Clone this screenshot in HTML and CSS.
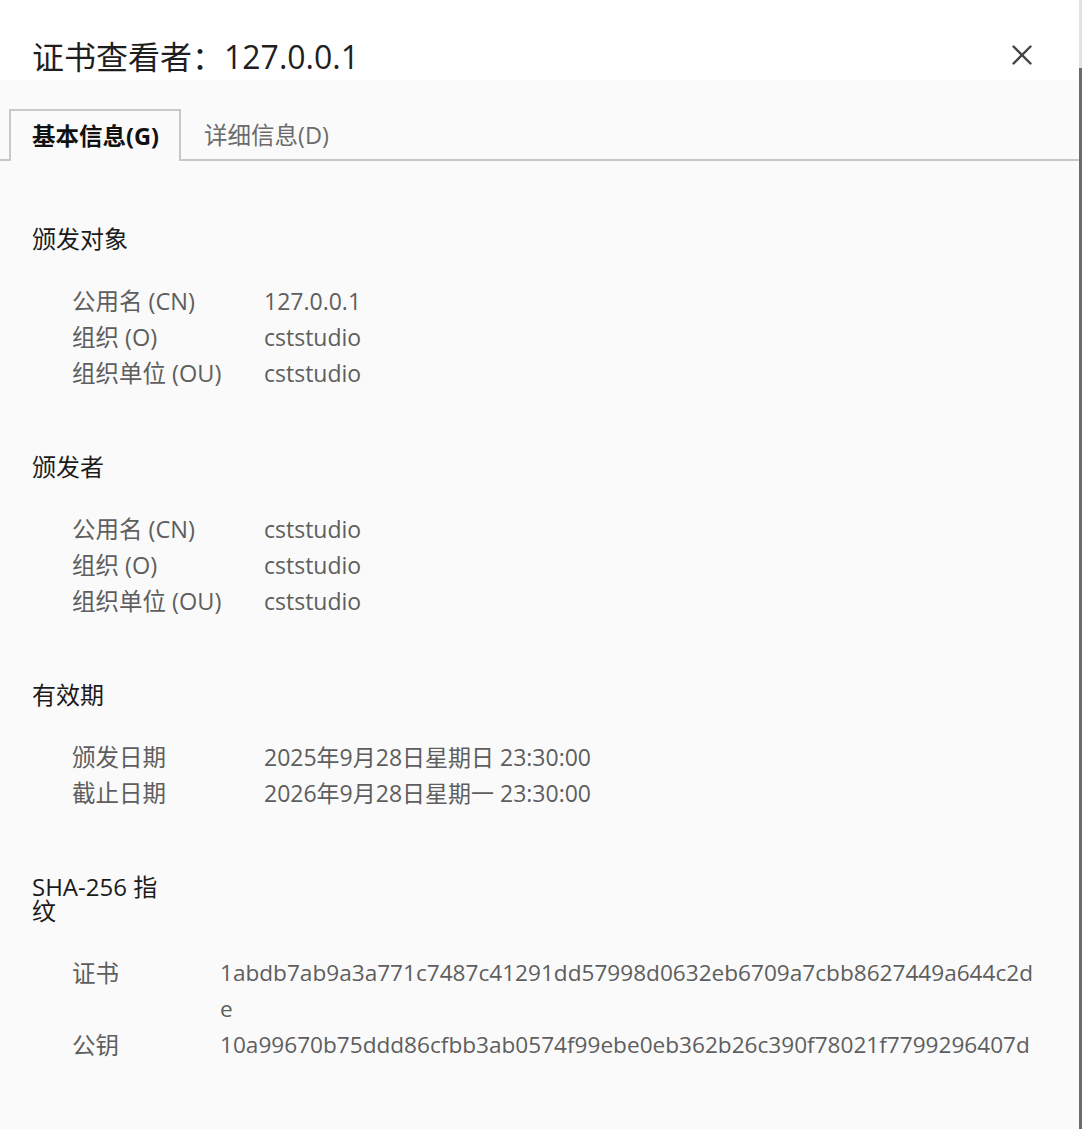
FILE: index.html
```html
<!DOCTYPE html>
<html lang="zh-CN">
<head>
<meta charset="utf-8">
<title>证书查看者</title>
<link rel="stylesheet" href="styles.css">
</head>
<body>
<div class="window">
  <div class="main">
    <header class="header">
      <h1 class="title">证书查看者：127.0.0.1</h1>
      <button class="close" aria-label="关闭">
        <svg viewBox="0 0 20 20" width="20" height="20"><path d="M1.5 1.5 L18.5 18.5 M18.5 1.5 L1.5 18.5" stroke="#454545" stroke-width="2.4" stroke-linecap="round" fill="none"/></svg>
      </button>
    </header>
    <div class="panel">
      <div class="tabs">
        <div class="tab active">基本信息(G)</div>
        <div class="tab">详细信息(D)</div>
      </div>
      <div class="content">
        <section class="section">
          <h2 class="heading">颁发对象</h2>
          <div class="fields">
            <div class="label">公用名 (CN)</div><div class="value">127.0.0.1</div>
            <div class="label">组织 (O)</div><div class="value">cststudio</div>
            <div class="label">组织单位 (OU)</div><div class="value">cststudio</div>
          </div>
        </section>
        <section class="section">
          <h2 class="heading">颁发者</h2>
          <div class="fields">
            <div class="label">公用名 (CN)</div><div class="value">cststudio</div>
            <div class="label">组织 (O)</div><div class="value">cststudio</div>
            <div class="label">组织单位 (OU)</div><div class="value">cststudio</div>
          </div>
        </section>
        <section class="section">
          <h2 class="heading">有效期</h2>
          <div class="fields">
            <div class="label">颁发日期</div><div class="value">2025年9月28日星期日 23:30:00</div>
            <div class="label">截止日期</div><div class="value">2026年9月28日星期一 23:30:00</div>
          </div>
        </section>
        <section class="section">
          <h2 class="heading">SHA-256 指纹</h2>
          <div class="fields hash">
            <div class="label">证书</div><div class="value">1abdb7ab9a3a771c7487c41291dd57998d0632eb6709a7cbb8627449a644c2de</div>
            <div class="label">公钥</div><div class="value">10a99670b75ddd86cfbb3ab0574f99ebe0eb362b26c390f78021f7799296407d</div>
          </div>
        </section>
      </div>
    </div>
  </div>
  <div class="edge"></div>
</div>
</body>
</html>
```

FILE: styles.css
```css
* { box-sizing: border-box; }
html, body { margin: 0; padding: 0; }
body {
  font-family: "Open Sans", "Noto Sans CJK SC", sans-serif;
  background: #fafafa;
  color: #1b1b1b;
}
.window {
  display: flex;
  width: 1082px;
  height: 1129px;
  overflow: hidden;
}
.main {
  flex: 1;
  display: flex;
  flex-direction: column;
  min-width: 0;
}
.edge {
  width: 3px;
  background: linear-gradient(to bottom, #e2e2e2 0, #e2e2e2 68px, #6b6b6b 68px, #6b6b6b 100%);
}
.header {
  height: 80px;
  background: #ffffff;
  display: flex;
  align-items: flex-start;
  justify-content: space-between;
  padding: 37px 47px 0 32px;
}
.title {
  margin: 0;
  font-size: 32px;
  line-height: 40px;
  font-weight: normal;
  color: #1f1f1f;
}
.close {
  border: 0;
  background: transparent;
  padding: 0;
  margin-top: 8px;
  width: 20px;
  height: 20px;
  display: block;
}
.close svg { display: block; }
.panel {
  flex: 1;
  background: #fafafa;
}
.tabs {
  margin-top: 29px;
  height: 52px;
  display: flex;
  padding-left: 9px;
  border-bottom: 2px solid #c8c8c8;
}
.tab {
  font-size: 23.5px;
  line-height: 52px;
  padding: 0 23px;
  color: #6b6b6b;
}
.tab.active {
  height: 52px;
  line-height: 50px;
  border: 2px solid #c8c8c8;
  border-bottom: 0;
  background: #fafafa;
  padding: 0 18px 0 21px;
  font-weight: bold;
  color: #111111;
  width: 172px;
}
.content {
  padding: 66px 40px 0 32px;
  display: flex;
  flex-direction: column;
  gap: 64px;
}
.section { display: flex; flex-direction: column; }
.heading {
  margin: 0 0 32px 0;
  max-width: 140px;
  font-size: 24px;
  line-height: 24px;
  font-weight: normal;
  color: #1b1b1b;
}
.fields {
  display: grid;
  grid-template-columns: 192px 1fr;
  padding-left: 40px;
  line-height: 36px;
  color: #5e5e5e;
}
.label { font-size: 23.5px; }
.value { font-size: 23px; }
.fields.hash {
  grid-template-columns: 148px 824px;
}
.fields.hash .value {
  font-size: 22.6px;
  word-break: break-all;
}
```
